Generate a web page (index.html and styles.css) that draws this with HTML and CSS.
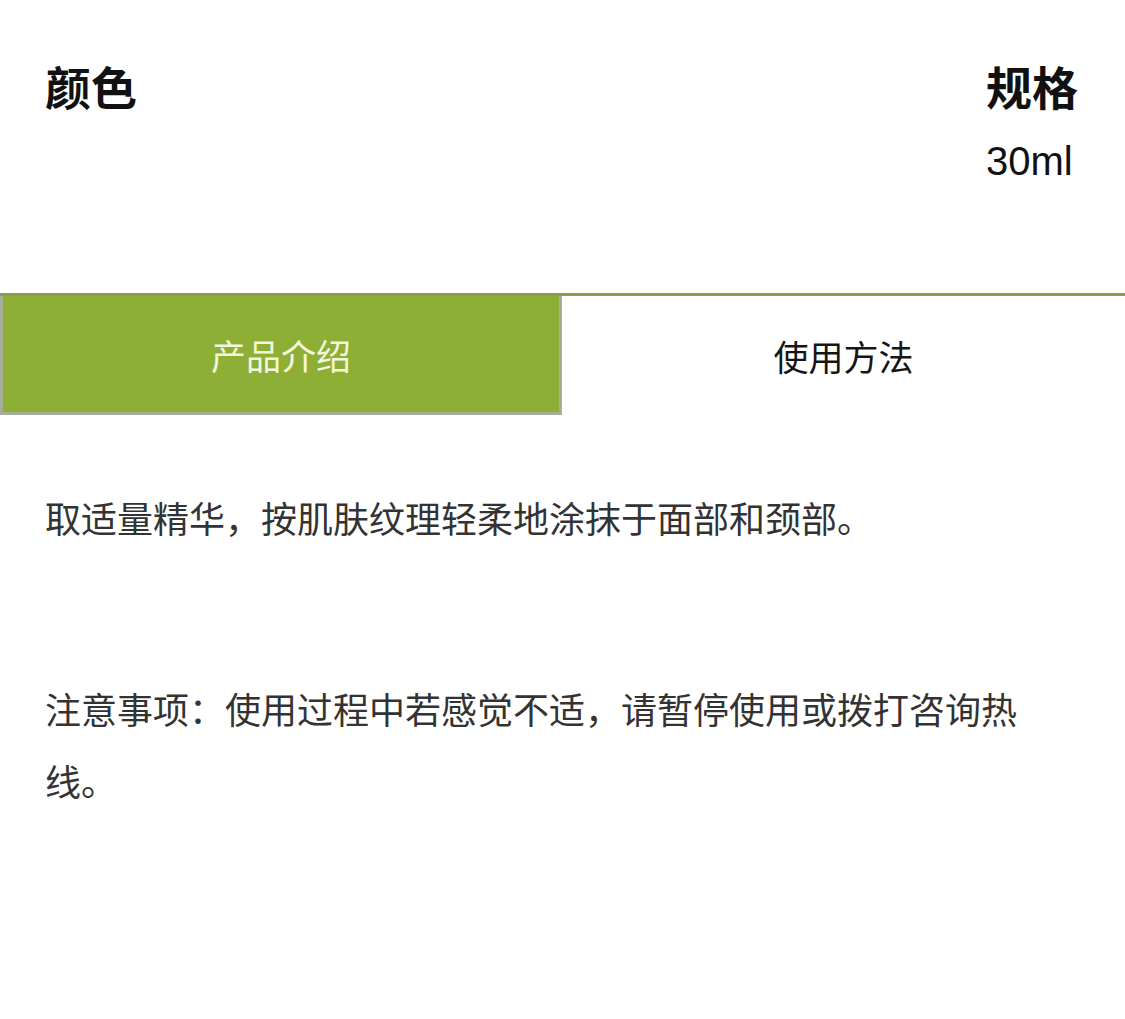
FILE: index.html
```html
<!DOCTYPE html>
<html lang="zh-CN">
<head>
    <meta charset="UTF-8">
    <title>产品详情</title>
    <link rel="stylesheet" href="styles.css">
</head>
<body>
<div class="page">
    <div class="specs">
        <div class="spec">
            <h2>颜色</h2>
        </div>
        <div class="spec">
            <h2>规格</h2>
            <div class="spec-value">30ml</div>
        </div>
    </div>

    <div class="tabs">
        <div class="tab active">产品介绍</div>
        <div class="tab">使用方法</div>
    </div>

    <div class="content">
        <p>取适量精华，按肌肤纹理轻柔地涂抹于面部和颈部。</p>
        <p>注意事项：使用过程中若感觉不适，请暂停使用或拨打咨询热线。</p>
    </div>
</div>
</body>
</html>
```

FILE: styles.css
```css
body {
    margin: 0;
    background: #fff;
    color: #333;
    font-family: "Noto Sans CJK SC", "Noto Sans", sans-serif;
}

.page {
    width: 1125px;
}

.specs {
    display: flex;
    justify-content: space-between;
    padding: 58px 47px 0 45px;
    height: 293px;
    box-sizing: border-box;
}

.spec h2 {
    margin: 0;
    font-size: 46px;
    line-height: 54px;
    font-weight: 700;
    color: #111;
}

.spec-value {
    margin-top: 26px;
    font-family: "Liberation Sans", "Noto Sans", sans-serif;
    font-size: 40px;
    line-height: 46px;
    color: #111;
}

.tabs {
    display: flex;
    border-top: 3px solid #8c9b4f;
}

.tab {
    width: 562px;
    height: 119px;
    display: flex;
    align-items: center;
    justify-content: center;
    font-size: 35px;
    color: #151515;
    box-sizing: border-box;
}

.tab.active {
    background: #8daf36;
    border: 3px solid #a6ae9a;
    border-top: 0;
    color: #f4f6dc;
}

.tab + .tab {
    flex: 1;
}

.content {
    padding: 66px 80px 0 45px;
}

.content p {
    margin: 0 0 119px;
    font-size: 36px;
    line-height: 72px;
    color: #333;
}
```
